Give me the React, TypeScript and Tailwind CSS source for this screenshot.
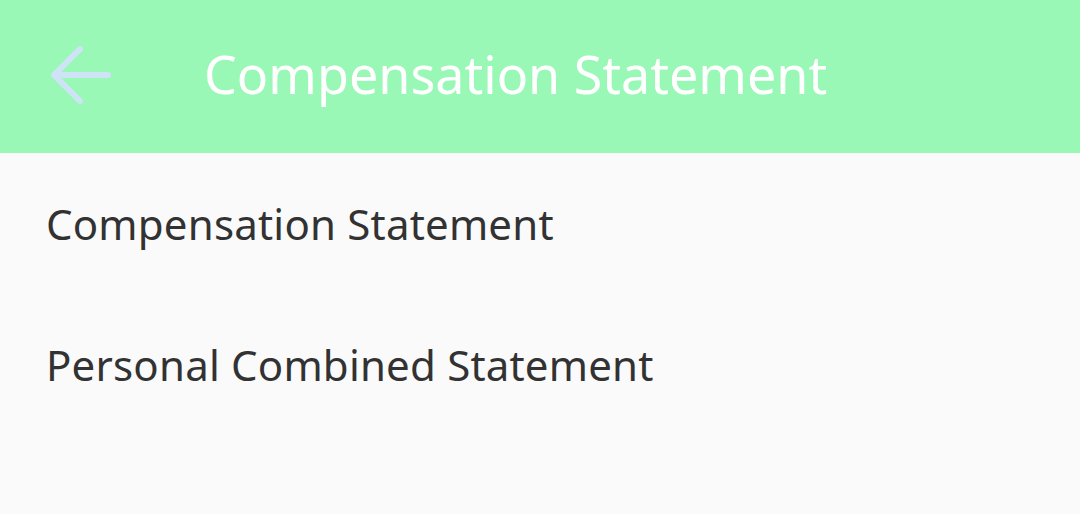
const items = ["Compensation Statement", "Personal Combined Statement"];

export default function App() {
  return (
    <div
      className="flex h-[514px] w-[1080px] flex-col overflow-hidden bg-[#fafafa]"
      style={{ fontFamily: '"Noto Sans", "Open Sans", sans-serif' }}
    >
      <header className="flex h-[153px] shrink-0 items-center bg-[#9af8b6] pb-[6px] pl-[48px]">
        <button aria-label="Back" className="flex h-[64px] w-[64px] items-center">
          <svg viewBox="0 0 64 64" className="h-[64px] w-[64px]" fill="none" stroke="#cfe3f7" strokeWidth={6} strokeLinecap="round" strokeLinejoin="round">
            <path d="M6 33h54M32 7L6 33l26 26" />
          </svg>
        </button>
        <h1 className="ml-[92px] text-[52px] leading-none text-white">Compensation Statement</h1>
      </header>
      <ul className="flex flex-col">
        {items.map((item) => (
          <li key={item} className="flex h-[141px] items-center px-[46px] text-[42px] tracking-[0.2px] text-[#323232]">
            {item}
          </li>
        ))}
      </ul>
    </div>
  );
}
